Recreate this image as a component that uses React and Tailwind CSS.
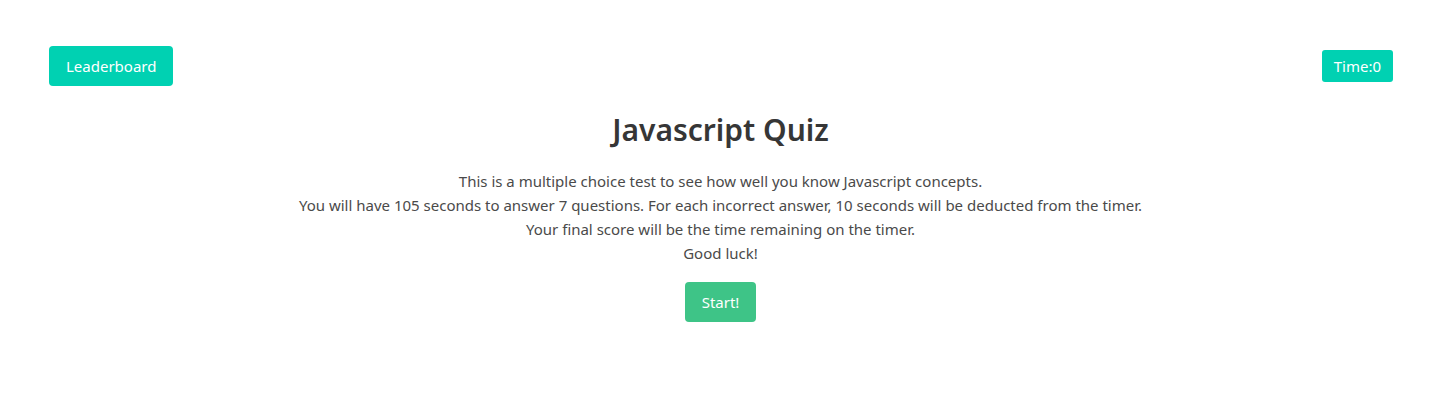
const App = () => {
  return (
    <div className="min-h-screen w-[1441px] bg-white text-[#4a4a4a]" style={{ fontFamily: '"Noto Sans", "Open Sans", sans-serif' }}>
      {/* Top bar */}
      <div className="flex items-center justify-between pl-[49px] pr-[48px] pt-[46px]">
        <button className="h-10 px-[17px] rounded-[4px] bg-[#00d1b2] text-white text-[15px] leading-none">
          Leaderboard
        </button>
        <button className="h-8 px-[12px] rounded-[3px] bg-[#00d1b2] text-white text-[15px] leading-none">
          Time:0
        </button>
      </div>

      {/* Intro */}
      <div className="flex flex-col items-center text-center mt-[24px]">
        <h1 className="text-[30px] font-semibold text-[#363636] leading-[40px]">Javascript Quiz</h1>
        <div className="mt-[19px] text-[15px] leading-6">
          <p>This is a multiple choice test to see how well you know Javascript concepts.</p>
          <p>You will have 105 seconds to answer 7 questions. For each incorrect answer, 10 seconds will be deducted from the timer.</p>
          <p>Your final score will be the time remaining on the timer.</p>
          <p>Good luck!</p>
        </div>
        <button className="mt-[17px] h-10 px-[17px] rounded-[4px] bg-[#3ec487] text-white text-[15px] leading-none">
          Start!
        </button>
      </div>
    </div>
  )
}

export default App
